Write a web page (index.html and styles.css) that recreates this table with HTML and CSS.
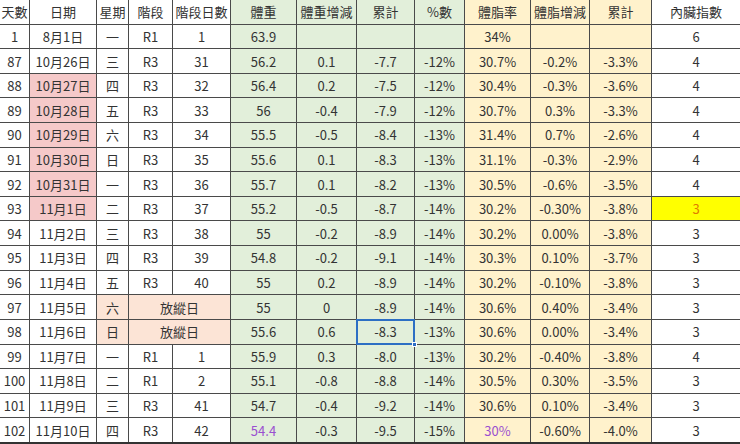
FILE: index.html
```html
<!DOCTYPE html>
<html lang="zh-Hant">
<head>
<meta charset="utf-8">
<title>體重紀錄</title>
<link rel="stylesheet" href="styles.css">
</head>
<body>
<div class="sheet">
  <div class="c">天數</div><div class="c">日期</div><div class="c">星期</div><div class="c">階段</div><div class="c">階段日數</div><div class="c g">體重</div><div class="c g">體重增減</div><div class="c g">累計</div><div class="c g">%數</div><div class="c y">體脂率</div><div class="c y">體脂增減</div><div class="c y">累計</div><div class="c">內臟指數</div>

  <div class="c">1</div><div class="c">8月1日</div><div class="c">一</div><div class="c">R1</div><div class="c">1</div><div class="c g">63.9</div><div class="c g"></div><div class="c g"></div><div class="c g"></div><div class="c y">34%</div><div class="c y"></div><div class="c y"></div><div class="c">6</div>

  <div class="c">87</div><div class="c">10月26日</div><div class="c">三</div><div class="c">R3</div><div class="c">31</div><div class="c g">56.2</div><div class="c g">0.1</div><div class="c g">-7.7</div><div class="c g">-12%</div><div class="c y">30.7%</div><div class="c y">-0.2%</div><div class="c y">-3.3%</div><div class="c">4</div>

  <div class="c">88</div><div class="c p">10月27日</div><div class="c">四</div><div class="c">R3</div><div class="c">32</div><div class="c g">56.4</div><div class="c g">0.2</div><div class="c g">-7.5</div><div class="c g">-12%</div><div class="c y">30.4%</div><div class="c y">-0.3%</div><div class="c y">-3.6%</div><div class="c">4</div>

  <div class="c">89</div><div class="c p">10月28日</div><div class="c">五</div><div class="c">R3</div><div class="c">33</div><div class="c g">56</div><div class="c g">-0.4</div><div class="c g">-7.9</div><div class="c g">-12%</div><div class="c y">30.7%</div><div class="c y">0.3%</div><div class="c y">-3.3%</div><div class="c">4</div>

  <div class="c">90</div><div class="c p">10月29日</div><div class="c">六</div><div class="c">R3</div><div class="c">34</div><div class="c g">55.5</div><div class="c g">-0.5</div><div class="c g">-8.4</div><div class="c g">-13%</div><div class="c y">31.4%</div><div class="c y">0.7%</div><div class="c y">-2.6%</div><div class="c">4</div>

  <div class="c">91</div><div class="c p">10月30日</div><div class="c">日</div><div class="c">R3</div><div class="c">35</div><div class="c g">55.6</div><div class="c g">0.1</div><div class="c g">-8.3</div><div class="c g">-13%</div><div class="c y">31.1%</div><div class="c y">-0.3%</div><div class="c y">-2.9%</div><div class="c">4</div>

  <div class="c">92</div><div class="c p">10月31日</div><div class="c">一</div><div class="c">R3</div><div class="c">36</div><div class="c g">55.7</div><div class="c g">0.1</div><div class="c g">-8.2</div><div class="c g">-13%</div><div class="c y">30.5%</div><div class="c y">-0.6%</div><div class="c y">-3.5%</div><div class="c">4</div>

  <div class="c">93</div><div class="c p">11月1日</div><div class="c">二</div><div class="c">R3</div><div class="c">37</div><div class="c g">55.2</div><div class="c g">-0.5</div><div class="c g">-8.7</div><div class="c g">-14%</div><div class="c y">30.2%</div><div class="c y">-0.30%</div><div class="c y">-3.8%</div><div class="c hl">3</div>

  <div class="c">94</div><div class="c">11月2日</div><div class="c">三</div><div class="c">R3</div><div class="c">38</div><div class="c g">55</div><div class="c g">-0.2</div><div class="c g">-8.9</div><div class="c g">-14%</div><div class="c y">30.2%</div><div class="c y">0.00%</div><div class="c y">-3.8%</div><div class="c">3</div>

  <div class="c">95</div><div class="c">11月3日</div><div class="c">四</div><div class="c">R3</div><div class="c">39</div><div class="c g">54.8</div><div class="c g">-0.2</div><div class="c g">-9.1</div><div class="c g">-14%</div><div class="c y">30.3%</div><div class="c y">0.10%</div><div class="c y">-3.7%</div><div class="c">3</div>

  <div class="c">96</div><div class="c">11月4日</div><div class="c">五</div><div class="c">R3</div><div class="c">40</div><div class="c g">55</div><div class="c g">0.2</div><div class="c g">-8.9</div><div class="c g">-14%</div><div class="c y">30.2%</div><div class="c y">-0.10%</div><div class="c y">-3.8%</div><div class="c">3</div>

  <div class="c">97</div><div class="c">11月5日</div><div class="c o">六</div><div class="c o span2">放縱日</div><div class="c g">55</div><div class="c g">0</div><div class="c g">-8.9</div><div class="c g">-14%</div><div class="c y">30.6%</div><div class="c y">0.40%</div><div class="c y">-3.4%</div><div class="c">3</div>

  <div class="c">98</div><div class="c">11月6日</div><div class="c o">日</div><div class="c o span2">放縱日</div><div class="c g">55.6</div><div class="c g">0.6</div><div class="c g sel">-8.3<span class="handle"></span></div><div class="c g">-13%</div><div class="c y">30.6%</div><div class="c y">0.00%</div><div class="c y">-3.4%</div><div class="c">3</div>

  <div class="c">99</div><div class="c">11月7日</div><div class="c">一</div><div class="c">R1</div><div class="c">1</div><div class="c g">55.9</div><div class="c g">0.3</div><div class="c g">-8.0</div><div class="c g">-13%</div><div class="c y">30.2%</div><div class="c y">-0.40%</div><div class="c y">-3.8%</div><div class="c">4</div>

  <div class="c">100</div><div class="c">11月8日</div><div class="c">二</div><div class="c">R1</div><div class="c">2</div><div class="c g">55.1</div><div class="c g">-0.8</div><div class="c g">-8.8</div><div class="c g">-14%</div><div class="c y">30.5%</div><div class="c y">0.30%</div><div class="c y">-3.5%</div><div class="c">3</div>

  <div class="c">101</div><div class="c">11月9日</div><div class="c">三</div><div class="c">R3</div><div class="c">41</div><div class="c g">54.7</div><div class="c g">-0.4</div><div class="c g">-9.2</div><div class="c g">-14%</div><div class="c y">30.6%</div><div class="c y">0.10%</div><div class="c y">-3.4%</div><div class="c">3</div>

  <div class="c">102</div><div class="c">11月10日</div><div class="c">四</div><div class="c">R3</div><div class="c">42</div><div class="c g pu">54.4</div><div class="c g">-0.3</div><div class="c g">-9.5</div><div class="c g">-15%</div><div class="c y pu">30%</div><div class="c y">-0.60%</div><div class="c y">-4.0%</div><div class="c">3</div>
</div>
</body>
</html>
```

FILE: styles.css
```css
html, body {
  margin: 0;
  padding: 0;
  background: #ffffff;
}

.sheet {
  width: 740px;
  height: 442px;
  display: grid;
  grid-template-columns: 29px 66px 31px 43px 57px 65px 59px 57px 49px 65px 58px 61px 1fr;
  grid-template-rows: repeat(18, 1fr);
  gap: 1px;
  background: #4a4a4a;
  border-bottom: 2px solid #333333;
  overflow: hidden;
  font-family: "Noto Sans CJK TC", "Noto Sans", sans-serif;
  font-size: 13px;
  color: #333333;
}

.c {
  background: #ffffff;
  display: flex;
  align-items: center;
  justify-content: center;
  white-space: nowrap;
  overflow: hidden;
  position: relative;
}

.g { background: #e2efda; }
.y { background: #fff2cc; }
.p { background: #f5c9c9; }
.o { background: #fce4d6; }
.hl { background: #ffff00; color: #e07b00; }
.pu { color: #9a4fd0; }

.span2 { grid-column: span 2; }

.sel {
  overflow: visible;
  z-index: 2;
}
.sel::before {
  content: "";
  position: absolute;
  inset: -1px;
  border: 2px solid #2d6fc4;
  pointer-events: none;
}
.handle {
  position: absolute;
  right: -3px;
  bottom: -3px;
  width: 5px;
  height: 5px;
  background: #2d6fc4;
  border: 1px solid #ffffff;
  box-sizing: border-box;
}
```
